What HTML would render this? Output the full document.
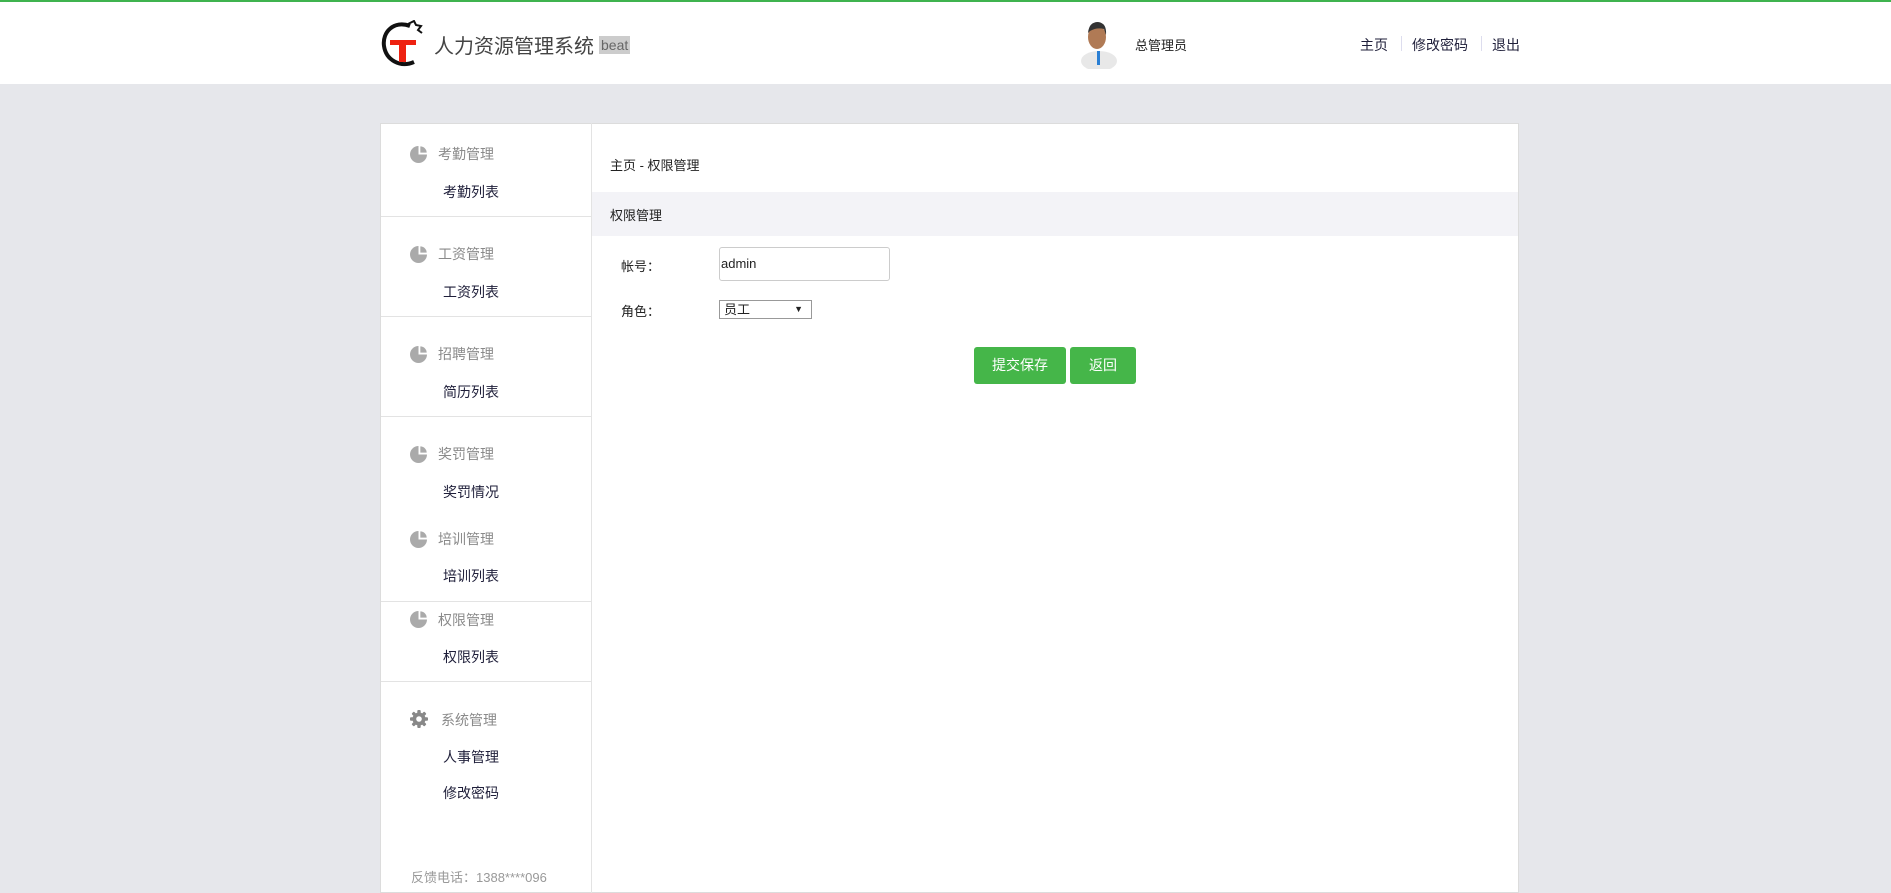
<!DOCTYPE html>
<html><head><meta charset="utf-8"><style>
*{margin:0;padding:0;box-sizing:border-box}
body{width:1891px;height:882px;overflow:hidden;background:#e6e7eb;font-family:"Liberation Sans","Noto Sans CJK SC",sans-serif;font-size:14px;color:#222;position:relative}
.a{position:absolute;white-space:nowrap}
#top{position:absolute;left:0;top:0;width:1891px;height:84px;background:#fff;border-top:2px solid #3fb34f}
#panel{position:absolute;left:380px;top:123px;width:1139px;height:770px;background:#fff;border:1px solid #dcdcdc}
#side{position:absolute;left:380px;top:123px;width:212px;height:770px;border-right:1px solid #e3e3e3}
.hr{position:absolute;left:381px;width:210px;height:1px;background:#e3e3e3}
.g{color:#8a8a8a;font-size:14px}
.s{color:#1f1f3a;font-size:14px}
.ic{position:absolute;width:17px;height:17px;border-radius:50%;background:conic-gradient(#fff 0 25%,#aaa 25% 100%)}
.ic:before{content:"";position:absolute;left:9px;top:1px;width:7px;height:7px;background:#aaa;border-radius:0 8px 0 0;transform:translate(1px,-1px) scale(.9)}
.btn{position:absolute;background:#45b649;color:#fff;border-radius:3px;text-align:center;font-size:14px;line-height:37px;height:37px}
</style></head><body>
<div id="top"></div>
<svg class="a" style="left:380px;top:20px" width="46" height="48" viewBox="0 0 46 48">
<path d="M30 6 C14 0 2 12 4 26 C6 40 20 48 34 42" fill="none" stroke="#111" stroke-width="4"/>
<path d="M28 4 l6 -3 l2 4 l5 1 l-3 4 l4 3" fill="none" stroke="#111" stroke-width="2"/>
<rect x="10" y="20" width="26" height="5" fill="#e21"/><rect x="19" y="22" width="7" height="20" fill="#e21"/>
</svg>
<div class="a" style="left:434px;top:30px;font-size:20px;color:#444">人力资源管理系统</div>
<div class="a" style="left:599px;top:36px;font-size:14px;color:#666;background:#ccc;padding:0 2px;line-height:18px">beat</div>
<svg class="a" style="left:1077px;top:17px" width="44" height="52" viewBox="0 0 44 52">
<ellipse cx="22" cy="44" rx="18" ry="10" fill="#e8e8e8"/>
<rect x="20" y="34" width="3" height="14" fill="#2a7fd4"/>
<ellipse cx="20" cy="20" rx="9" ry="12" fill="#b07a55"/>
<path d="M11 16 Q12 5 21 5 Q30 6 29 18 L27 12 Q20 10 13 14 Z" fill="#333"/>
</svg>
<div class="a" style="left:1135px;top:35px;font-size:13px">总管理员</div>
<div class="a" style="left:1360px;top:35px;font-size:14px;color:#1f1f3a">主页</div>
<div class="a" style="left:1401px;top:36px;width:1px;height:15px;background:#dde"></div>
<div class="a" style="left:1412px;top:35px;font-size:14px;color:#1f1f3a">修改密码</div>
<div class="a" style="left:1481px;top:36px;width:1px;height:15px;background:#dde"></div>
<div class="a" style="left:1492px;top:35px;font-size:14px;color:#1f1f3a">退出</div>

<div id="panel"></div><div id="side"></div>
<div class="hr" style="top:216px"></div><div class="hr" style="top:316px"></div><div class="hr" style="top:416px"></div><div class="hr" style="top:601px"></div><div class="hr" style="top:681px"></div>

<div class="ic" style="left:410px;top:146px"></div><div class="a g" style="left:438px;top:144px">考勤管理</div><div class="a s" style="left:443px;top:182px">考勤列表</div>
<div class="ic" style="left:410px;top:246px"></div><div class="a g" style="left:438px;top:244px">工资管理</div><div class="a s" style="left:443px;top:282px">工资列表</div>
<div class="ic" style="left:410px;top:346px"></div><div class="a g" style="left:438px;top:344px">招聘管理</div><div class="a s" style="left:443px;top:382px">简历列表</div>
<div class="ic" style="left:410px;top:446px"></div><div class="a g" style="left:438px;top:444px">奖罚管理</div><div class="a s" style="left:443px;top:482px">奖罚情况</div>
<div class="ic" style="left:410px;top:531px"></div><div class="a g" style="left:438px;top:529px">培训管理</div><div class="a s" style="left:443px;top:566px">培训列表</div>
<div class="ic" style="left:410px;top:611px"></div><div class="a g" style="left:438px;top:610px">权限管理</div><div class="a s" style="left:443px;top:647px">权限列表</div>
<svg class="a" style="left:410px;top:710px" width="18" height="18" viewBox="0 0 18 18"><g fill="#888"><circle cx="9" cy="9" r="6.5"/><rect x="7.3" y="0" width="3.4" height="18" rx="1"/><rect x="7.3" y="0" width="3.4" height="18" rx="1" transform="rotate(45 9 9)"/><rect x="7.3" y="0" width="3.4" height="18" rx="1" transform="rotate(90 9 9)"/><rect x="7.3" y="0" width="3.4" height="18" rx="1" transform="rotate(135 9 9)"/></g><circle cx="9" cy="9" r="2.8" fill="#fff"/></svg>
<div class="a g" style="left:441px;top:710px">系统管理</div>
<div class="a s" style="left:443px;top:747px">人事管理</div><div class="a s" style="left:443px;top:783px">修改密码</div>
<div class="a" style="left:411px;top:867px;font-size:13px;color:#999">反馈电话：1388****096</div>

<div class="a" style="left:610px;top:155px;font-size:13px">主页 - 权限管理</div>
<div class="a" style="left:592px;top:192px;width:926px;height:44px;background:#f3f3f7"></div>
<div class="a" style="left:610px;top:205px;font-size:13px">权限管理</div>
<div class="a" style="left:621px;top:256px;font-size:13px">帐号：</div>
<div class="a" style="left:719px;top:247px;width:171px;height:34px;border:1px solid #ccc;border-radius:3px;font-size:13px;line-height:32px;padding-left:1px">admin</div>
<div class="a" style="left:621px;top:301px;font-size:13px">角色：</div>
<div class="a" style="left:719px;top:300px;width:93px;height:19px;border:1px solid #999;font-size:13px;line-height:17px;padding-left:4px">员工<span style="position:absolute;right:8px;font-size:9px">▼</span></div>
<div class="btn" style="left:974px;top:347px;width:92px">提交保存</div>
<div class="btn" style="left:1070px;top:347px;width:66px">返回</div>
</body></html>
